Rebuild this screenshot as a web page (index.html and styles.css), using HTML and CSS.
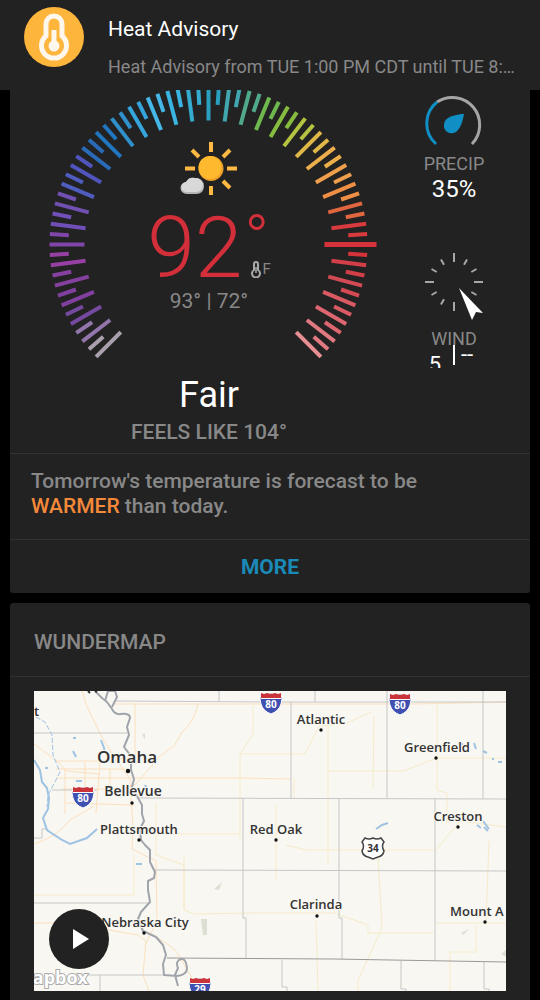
FILE: index.html
```html
<!DOCTYPE html>
<html lang="en">
<head>
    <meta charset="UTF-8">
    <meta name="viewport" content="width=device-width, initial-scale=1.0">
    <title>Weather</title>
    <link rel="stylesheet" href="styles.css">
</head>
<body>
    <header class="alert">
        <svg class="alert-icon" viewBox="0 0 60 60" aria-hidden="true">
            <circle cx="30" cy="30" r="30" fill="#fdb53c"/>
            <path d="M22 29V17a8 8 0 0 1 16 0v12a12.5 12.5 0 1 1-16 0z" fill="none" stroke="#fff6ec" stroke-width="5" stroke-linejoin="round"/>
            <path d="M30 23v16" stroke="#fff6ec" stroke-width="5"/>
            <circle cx="30" cy="39" r="5.5" fill="#fff6ec"/>
        </svg>
        <div class="alert-text">
            <h1>Heat Advisory</h1>
            <p>Heat Advisory from TUE 1:00 PM CDT until TUE 8:…</p>
        </div>
    </header>

    <main>
        <section class="card current">
            <div class="conditions">
                <div class="now">
                    <div class="dial">
                        <svg class="dial-ticks" id="dial" viewBox="0 0 338 280" aria-hidden="true"></svg>
                        <div class="reading">
                            <svg class="sky" viewBox="0 0 58 56" aria-hidden="true">
                                <g stroke="#fdb942" stroke-width="4">
                                    <path d="M31 1v10M31 45v9M5 27.500h10M47 27.500h10M12 9l7 7M50 9l-7 7M43 40l7 7"/>
                                </g>
                                <circle cx="31" cy="27.500" r="12.500" fill="#f0a028"/>
                                <circle cx="30" cy="26.500" r="11.500" fill="#ffb92e"/>
                                <path d="M7 53a6 6 0 0 1-1-12 8 8 0 0 1 9-4 8 8 0 0 1 9 8c0 5-3 8-8 8z" fill="#b5b5b5"/>
                                <path d="M7 51a5 5 0 0 1-1-10 8 8 0 0 1 9-4 7 7 0 0 1 8 7c0 4-3 7-7 7z" fill="#d8d8d8"/>
                            </svg>
                            <div class="temp">
                                <span class="degrees">92</span>
                                <span class="temp-side">
                                    <span class="ring">°</span>
                                    <span class="unit">
                                        <svg viewBox="0 0 10 18" aria-hidden="true">
                                            <path d="M3 10V4a2 2 0 0 1 4 0v6a4 4 0 1 1-4 0z" fill="none" stroke="#a8a8a8" stroke-width="2"/>
                                            <path d="M5 7v6" stroke="#a8a8a8" stroke-width="1.500"/>
                                        </svg>F
                                    </span>
                                </span>
                            </div>
                            <div class="range">93° | 72°</div>
                        </div>
                    </div>
                    <div class="phrase">Fair</div>
                    <div class="feels">FEELS LIKE 104°</div>
                </div>

                <div class="stats">
                    <div class="stat">
                        <svg class="precip-icon" viewBox="0 0 60 59" fill="none" stroke-width="3" aria-hidden="true">
                            <path d="M13 8A27.500 27.500 0 0 1 48 50" stroke="#a5a5a5"/>
                            <path d="M12 50A27.500 27.500 0 0 1 13 8" stroke="#0f8fc4"/>
                            <path d="M40 20c-6 0-16 2-19 7-4 9 4 15 11 11 5-4 7-12 8-18z" fill="#0f8fc4"/>
                        </svg>
                        <span class="stat-name">PRECIP</span>
                        <span class="stat-value">35%</span>
                    </div>
                    <div class="stat wind">
                        <svg class="wind-icon" id="compass" viewBox="0 0 60 78" aria-hidden="true">
                            <path d="M35 38l24 25-7-1-4 8z" fill="#fff"/>
                        </svg>
                        <span class="stat-name">WIND</span>
                        <div class="wind-values">
                            <span class="speed">5</span>
                            <span class="divider"></span>
                            <span class="gust">--</span>
                        </div>
                    </div>
                </div>
            </div>
            <p class="forecast">Tomorrow's temperature is forecast to be <strong>WARMER</strong> than today.</p>
            <button class="more" type="button">MORE</button>
        </section>

        <section class="card">
            <h2>WUNDERMAP</h2>
            <div class="map-wrap">
                <div class="map">
                    <svg class="map-canvas" viewBox="0 0 472 300" role="img" aria-label="Map of southwest Iowa">
                        <defs>
                            <g id="interstate">
                                <path d="M-10 1q5 2 10-1 5 3 10 1 2 5 0 10-2 7-10 10-8-3-10-10-2-5 0-10z" fill="#3f50b0" stroke="#fff" stroke-width="1"/>
                                <path d="M-10 0l3 1 3-1 4 1 4-1 3 1 3-1v5h-20z" fill="#c8343a"/>
                                <path d="M-10 5.500h20" stroke="#fff"/>
                            </g>
                        </defs>
                        <rect width="472" height="300" fill="#f8f7f2"/>

                        <g class="roads">
                            <path d="M48 0q4 16 10 26l12 24 12 18 14 20 3 50-1 20 24 12 1 60-12 24"/>
                            <path d="M81 13h300l91-2M101 12v54l-18 2M164 13q-4 18-16 28l-8 14-14 10-24 28-16 6"/>
                            <path d="M0 53l24 18 8 9 34 3M22 70h60M22 78h70M22 87h184l50 1M28 98h67M32 112l68 2"/>
                            <path d="M31 78v45M51 71v30M66 72l-4 50M76 78v25M0 153q24-8 36-24l24-14"/>
                            <path d="M0 232h34l70 12 8 6-3 34 6 16M112 240q22 12 30 20l18 30 6 10"/>
                        </g>
                        <g class="roads faint">
                            <path d="M219 15v28l-13 20v84M206 63h65l14-28 26-2 26-12M294 33v140M260 88v20M340 25l-1 72"/>
                            <path d="M294 80h75l34-13h69M403 13v86l10 3v30M206 143h-84M122 112v52l28 10v45l10 4 56-1"/>
                            <path d="M150 163v55M242 114v75M216 222h84l34 12v8h66M344 165l4 72-24 52v11M282 230l2 70"/>
                            <path d="M252 154l20 5h130l24-29 46 6M402 232h70M455 150l-3 80M416 261v39M416 261h26v-26M0 204h100M100 204v-40"/>
                        </g>
                        <g class="woods">
                            <path d="M167 228h6v16h-4zM180 198l8-7-3 8zM124 192l12 1zM190 124l7-2zM427 242l8-4-6 6zM108 43h3v6zM196 95h6zM409 268l4-2zM467 263l5-4v7z"/>
                        </g>
                        <g class="counties">
                            <path d="M0 42h93M81 10l155 1h236M185 0v10M281 0v11M257 11v96M353 0v107M449 0v108"/>
                            <path d="M103 107l369 1M209 107v120h3v40M305 108v119h3v41M401 108v162M121 179l351 1"/>
                            <path d="M0 212h114M18 99h45M54 284h76M66 284v16M0 147h8v-9h5"/>
                            <path d="M248 269v27h5v4M367 270v28h5v2M450 271v27h5v2"/>
                            <path d="M133 267l167 1 172 3" class="state"/>
                        </g>
                        <g class="water">
                            <path d="M0 69l6 10 2 12 5 6 2 10-1 11-5 9 4 12 15 10 8 4 17-6 10-9" stroke-width="2"/>
                            <path d="M2 26l9 5 7 13 1 20 7 17-5 10-7 13-1 12" stroke-dasharray="5 2"/>
                            <path d="M39 47h3M39 60l3 6M67 49l3 8 1 5M11 77h3M42 90h6M111 94l2 4M102 173h6M342 138l6-4 6-2M424 53h5M440 52l2 6M449 60l4 2M458 68h2M464 71h4M443 134l4 3M449 130l6 8M450 136l4 4" stroke-width="2"/>
                        </g>
                        <g class="river">
                            <path d="M61 0l7 7 5 4 5 7q3 6 9 5 9-1 9 4l-3 9 2 8-5 12 7 9v14l3 9-2 8 6 11 4 7v9l2 7-4 8 1 11 4 5 5 5v12l5 10-1 6-6 3v9l2 12-9 10-3 7 5 12 13 6 7 8 3 10-3 9 1 11 13 1q10-1 10-8-1-10-6-9-6 2-3 9l-3 7 3 11"/>
                            <path d="M71 10l3-10h7l2 6-5 10"/>
                        </g>

                        <g class="dots">
                            <circle cx="94" cy="80" r="2.200"/>
                            <circle cx="98" cy="112" r="1.700"/>
                            <circle cx="105" cy="149" r="1.700"/>
                            <circle cx="242" cy="149" r="1.700"/>
                            <circle cx="287" cy="39" r="1.700"/>
                            <circle cx="402" cy="67" r="1.700"/>
                            <circle cx="424" cy="136" r="1.700"/>
                            <circle cx="283" cy="225" r="1.700"/>
                            <circle cx="110" cy="242" r="1.700"/>
                            <circle cx="451" cy="231" r="1.700"/>
                        </g>
                        <g class="towns">
                            <text x="93" y="72" class="city">Omaha</text>
                            <text x="99" y="105" class="suburb">Bellevue</text>
                            <text x="105" y="143">Plattsmouth</text>
                            <text x="242" y="143">Red Oak</text>
                            <text x="287" y="33">Atlantic</text>
                            <text x="403" y="61">Greenfield</text>
                            <text x="424" y="130">Creston</text>
                            <text x="282" y="218">Clarinda</text>
                            <text x="111" y="236">Nebraska City</text>
                            <text x="416" y="225" class="start">Mount A</text>
                            <text x="0" y="25" class="start">t</text>
                            <path d="M54 0l2 2M61 0l2 1" stroke="#333" stroke-width="2"/>
                        </g>

                        <g class="shields">
                            <use href="#interstate" x="49" y="96"/>
                            <text x="49" y="111">80</text>
                            <use href="#interstate" x="237" y="2"/>
                            <text x="237" y="17">80</text>
                            <use href="#interstate" x="366" y="3"/>
                            <text x="366" y="18">80</text>
                            <use href="#interstate" x="166" y="287"/>
                            <text x="166" y="302">29</text>
                            <path d="M331 147q4 2 8 0 4 2 8 0l3 4q-3 4 0 9-1 5-6 6l-5 2-5-2q-5-1-6-6 3-5 0-9z" fill="#fff" stroke="#444" stroke-width="1.500"/>
                            <text x="339" y="161" class="us">34</text>
                        </g>
                        <text x="54" y="293" class="credit">mapbox</text>
                    </svg>
                    <button class="play" type="button" aria-label="Play">
                        <svg viewBox="0 0 60 60" aria-hidden="true"><path d="M24 20l16 10-16 10z" fill="#fff"/></svg>
                    </button>
                </div>
            </div>
        </section>
    </main>

    <script>
        const SVG_NS = 'http://www.w3.org/2000/svg';

        // One colour per long tick, from the cold end to the hot end
        const colors = [
            '#a99fad', '#9175ab', '#7549a0', '#8040a0', '#8641a0', '#9640a4',
            '#8045a8', '#7050b8', '#7050b0', '#4f5cc0', '#5055bd', '#2a6bb8',
            '#2176be', '#3090cc', '#35a5dc', '#45b8e8', '#3ab4e0', '#35abd0',
            '#2b9fc0', '#42a6b0', '#50a98a', '#6fb84f', '#86bc40', '#b5c440',
            '#e0b848', '#edae4c', '#ef9f4b', '#ef8f45', '#e0663f', '#d93a3d',
            '#d5323a', '#d33f48', '#d44a54', '#d95a63', '#dd6670', '#e07a80',
            '#e88f93'
        ];

        // Draws a line along the radius at the given angle
        function drawTick(svg, cx, cy, angle, inner, outer, color, width) {
            const line = document.createElementNS(SVG_NS, 'line');
            const rad = angle * Math.PI / 180;
            line.setAttribute('x1', cx + inner * Math.cos(rad));
            line.setAttribute('y1', cy + inner * Math.sin(rad));
            line.setAttribute('x2', cx + outer * Math.cos(rad));
            line.setAttribute('y2', cy + outer * Math.sin(rad));
            line.setAttribute('stroke', color);
            line.setAttribute('stroke-width', width);
            svg.prepend(line);
        }

        const dial = document.getElementById('dial');
        for (let i = 0; i <= 72; i++) {
            const angle = 135 + i * 3.75;
            const color = colors[Math.floor(i / 2)];
            if (i === 60) {
                // current temperature
                drawTick(dial, 168.5, 154.5, angle, 116, 168, color, 5);
            } else {
                drawTick(dial, 168.5, 154.5, angle, i % 2 ? 140 : 124, 159, color, 4);
            }
        }

        const compass = document.getElementById('compass');
        for (let i = 0; i < 12; i++) {
            if (i === 2) continue; // under the arrow
            drawTick(compass, 30, 32, i * 30, 20, i % 3 ? 26 : 29, '#a8a8a8', 2);
        }
    </script>
</body>
</html>
```
FILE: styles.css
```css
* {
    box-sizing: border-box;
}

body {
    margin: 0;
    background-color: #000;
    color: #888;
    font-family: Roboto, sans-serif;
}

h1, h2, p {
    margin: 0;
    font-weight: 400;
}

svg {
    display: block;
}

button {
    border: none;
    padding: 0;
    cursor: pointer;
    font-family: inherit;
}

/* Alert bar */
.alert {
    display: flex;
    gap: 24px;
    height: 90px;
    padding: 7px 24px;
    background-color: #222;
}

.alert-icon {
    flex: none;
    width: 60px;
    height: 60px;
}

.alert-text {
    min-width: 0;
    padding-top: 8px;
}

.alert h1 {
    color: #fff;
    font-size: 21px;
    line-height: 28px;
}

.alert p {
    margin-top: 12px;
    font-size: 18px;
    line-height: 24px;
    white-space: nowrap;
}

/* Cards */
main {
    display: flex;
    flex-direction: column;
    gap: 10px;
    padding: 0 10px;
}

.card {
    background-color: #222;
    border-radius: 3px 3px 0 0;
}

.current {
    border-radius: 0 0 3px 3px;
}

.conditions {
    display: grid;
    grid-template-columns: 1fr 152px;
    padding: 0 0 9px 30px;
}

.now {
    text-align: center;
}

.dial {
    display: grid;
    justify-items: center;
}

.dial-ticks,
.reading {
    grid-area: 1 / 1;
}

.dial-ticks {
    width: 338px;
    height: 280px;
}

.reading {
    display: flex;
    flex-direction: column;
    align-items: center;
    padding-top: 51px;
}

.sky {
    width: 58px;
    height: 56px;
}

.temp {
    display: flex;
    margin-top: 18px;
    color: #d32f3a;
}

.degrees {
    font-size: 86px;
    font-weight: 300;
    line-height: 66px;
}

.temp-side {
    display: flex;
    flex-direction: column;
    justify-content: space-between;
    padding-bottom: 3px;
}

.ring {
    font-size: 66px;
    font-weight: 300;
    line-height: 50px;
    height: 40px;
}

.unit {
    display: flex;
    align-items: center;
    gap: 2px;
    padding-left: 8px;
    color: #888;
    font-size: 15px;
    line-height: 18px;
}

.unit svg {
    width: 10px;
    height: 18px;
}

.range {
    margin-top: 8px;
    font-size: 21px;
    line-height: 24px;
}

.phrase {
    margin-top: 3px;
    color: #fff;
    font-size: 36px;
    line-height: 44px;
}

.feels {
    margin-top: 3px;
    font-size: 21px;
    font-weight: 500;
    line-height: 24px;
}

/* Precipitation and wind */
.stat {
    display: flex;
    flex-direction: column;
    align-items: center;
    padding-top: 4px;
}

.precip-icon {
    width: 60px;
    height: 59px;
}

.stat-name {
    font-size: 18px;
    line-height: 22px;
}

.stat-value {
    color: #fff;
    font-size: 24px;
    line-height: 28px;
}

.wind {
    margin-top: 43px;
}

.wind-icon {
    width: 60px;
    height: 78px;
}

.wind-values {
    display: grid;
    grid-template-columns: 24px 2px 24px;
    gap: 6px;
    height: 23px;
    margin-top: -5px;
    overflow: hidden;
    color: #fff;
    font-size: 22px;
}

.speed {
    padding-top: 6px;
    line-height: 28px;
    text-align: center;
}

.divider {
    height: 20px;
    background-color: #fff;
}

.gust {
    line-height: 20px;
}

.forecast {
    padding: 15px 21px 20px;
    border-top: 1px solid #333;
    font-size: 21px;
    font-weight: 500;
    line-height: 25px;
}

.forecast strong {
    color: #f5893a;
    font-weight: 500;
}

.more {
    display: block;
    width: 100%;
    height: 54px;
    border-top: 1px solid #333;
    background: none;
    color: #1a8ab8;
    font-size: 21px;
    font-weight: 700;
}

/* Map */
h2 {
    padding: 27px 24px 21px;
    border-bottom: 1px solid #333;
    font-size: 21px;
    font-weight: 500;
    line-height: 25px;
}

.map-wrap {
    padding: 14px 24px 9px;
}

.map {
    position: relative;
}

.map-canvas {
    width: 100%;
    font-family: "Open Sans", sans-serif;
}

.map-canvas g {
    fill: none;
}

.map-canvas .roads {
    stroke: #fce0bd;
    stroke-width: 1;
}

.map-canvas .faint {
    stroke: #f6ebc8;
}

.map-canvas .woods {
    fill: #dddfd2;
}

.map-canvas .counties {
    stroke: #c6c6c6;
    stroke-width: 1;
}

.counties .state {
    stroke: #999;
}

.map-canvas .water {
    stroke: #9fc3e3;
}

.map-canvas .river {
    stroke: #a0a4ab;
    stroke-width: 2;
    stroke-linejoin: round;
}

.map-canvas .dots {
    fill: #111;
}

.map-canvas .towns {
    fill: #333;
    font-size: 13px;
    font-weight: 600;
    text-anchor: middle;
}

.towns text {
    stroke: #f8f7f2;
    stroke-width: 2;
    paint-order: stroke;
}

.towns .city {
    font-size: 17px;
}

.towns .suburb {
    font-size: 14px;
}

.towns .start {
    text-anchor: start;
}

.shields text {
    fill: #fff;
    font-size: 10px;
    font-weight: 700;
    text-anchor: middle;
}

.shields .us {
    fill: #333;
}

.credit {
    fill: #fff;
    stroke: #aaa;
    stroke-width: 2;
    paint-order: stroke;
    font-size: 18px;
    font-weight: 700;
    text-anchor: end;
}

.play {
    position: absolute;
    left: 15px;
    bottom: 22px;
    width: 60px;
    height: 60px;
    border-radius: 50%;
    background-color: #222;
}
```
